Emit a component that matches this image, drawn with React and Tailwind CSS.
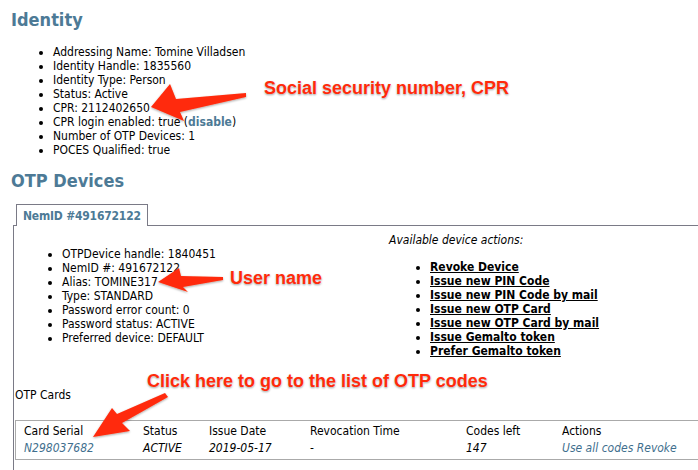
import React from "react";

const identity = [
  "Addressing Name: Tomine Villadsen",
  "Identity Handle: 1835560",
  "Identity Type: Person",
  "Status: Active",
  "CPR: 2112402650",
];

const device = [
  "OTPDevice handle: 1840451",
  "NemID #: 491672122",
  "Alias: TOMINE317",
  "Type: STANDARD",
  "Password error count: 0",
  "Password status: ACTIVE",
  "Preferred device: DEFAULT",
];

const actions = [
  "Revoke Device",
  "Issue new PIN Code",
  "Issue new PIN Code by mail",
  "Issue new OTP Card",
  "Issue new OTP Card by mail",
  "Issue Gemalto token",
  "Prefer Gemalto token",
];

function Note({ className, children }) {
  return (
    <div
      className={
        "absolute whitespace-nowrap font-['Liberation_Sans',Arial,sans-serif] text-[18px] leading-[20px] font-bold text-[#ff2a0a] [text-shadow:0_0_2px_#fff,0_1px_2px_rgba(0,0,0,0.45)] " +
        className
      }
    >
      {children}
    </div>
  );
}

function Arrows() {
  return (
    <svg className="absolute left-0 top-0 pointer-events-none" width="698" height="470">
      <defs>
        <filter id="sh" x="-20%" y="-20%" width="140%" height="140%">
          <feDropShadow dx="0" dy="1" stdDeviation="1" floodColor="#000" floodOpacity="0.35" />
        </filter>
      </defs>
      <g fill="#ff2a0a" filter="url(#sh)">
        <polygon points="151,107 170,84 176,99 246,93 246,97 180,112 184,121" />
        <polygon points="158,282 179,268 181,276 223,277 223,280 183,287 188,292" />
        <polygon points="93,437 112,408 117,414 165,393 168,397 122,423 130,431" />
      </g>
    </svg>
  );
}

export default function App() {
  return (
    <div className="relative w-[698px] h-[470px] overflow-hidden bg-white text-black font-['DejaVu_Sans_Condensed','DejaVu_Sans',sans-serif] text-[12px] leading-[14px]">
      <h2 className="pl-[11px] pt-[9px] text-[18px] leading-[22px] font-bold text-[#4d7a96]">Identity</h2>
      <ul className="mt-[14px] pl-[53px] list-disc">
        {identity.map((t) => (
          <li key={t}>{t}</li>
        ))}
        <li>
          CPR login enabled: true (<span className="font-bold text-[#4d7a96]">disable</span>)
        </li>
        <li>Number of OTP Devices: 1</li>
        <li>POCES Qualified: true</li>
      </ul>

      <h2 className="mt-[13px] pl-[11px] text-[18px] leading-[22px] font-bold text-[#4d7a96]">OTP Devices</h2>

      <div className="mt-[12px] ml-[13px]">
        <div className="flex">
          <div className="relative z-10 -mb-px ml-[3px] h-[22px] whitespace-nowrap border border-b-0 border-[#7a7a86] bg-white px-[6px] pt-[4px] font-bold tracking-[-0.2px] text-[#4d7a96]">
            NemID #491672122
          </div>
        </div>
        <div className="w-[720px] h-[260px] border-l border-t border-[#7a7a86] pt-[7px]">
          <div className="grid grid-cols-[375px_1fr]">
            <ul className="mt-[14px] pl-[48px] list-disc">
              {device.map((t) => (
                <li key={t}>{t}</li>
              ))}
            </ul>
            <div>
              <p className="italic">Available device actions:</p>
              <ul className="mt-[13px] pl-[41px] list-disc">
                {actions.map((t) => (
                  <li key={t}>
                    <span className="font-bold underline">{t}</span>
                  </li>
                ))}
              </ul>
            </div>
          </div>

          <p className="mt-[30px] pl-[1px]">OTP Cards</p>

          <div className="mt-[18px] ml-[1px] border border-[#aaaaaa] pt-[3px] pb-[4px] pl-[8px]">
            <div className="grid grid-cols-[119px_66px_101px_156px_96px_1fr] gap-y-[3px]">
              <span>Card Serial</span>
              <span>Status</span>
              <span>Issue Date</span>
              <span>Revocation Time</span>
              <span>Codes left</span>
              <span>Actions</span>
              <span className="italic text-[#3f6f8e]">N298037682</span>
              <span className="italic">ACTIVE</span>
              <span className="italic">2019-05-17</span>
              <span>-</span>
              <span className="italic">147</span>
              <span className="italic text-[#3f6f8e]">Use all codes Revoke</span>
            </div>
          </div>
        </div>
      </div>

      <Note className="left-[264px] top-[78px]">Social security number, CPR</Note>
      <Note className="left-[230px] top-[268px]">User name</Note>
      <Note className="left-[147px] top-[371px]">Click here to go to the list of OTP codes</Note>
      <Arrows />
    </div>
  );
}
